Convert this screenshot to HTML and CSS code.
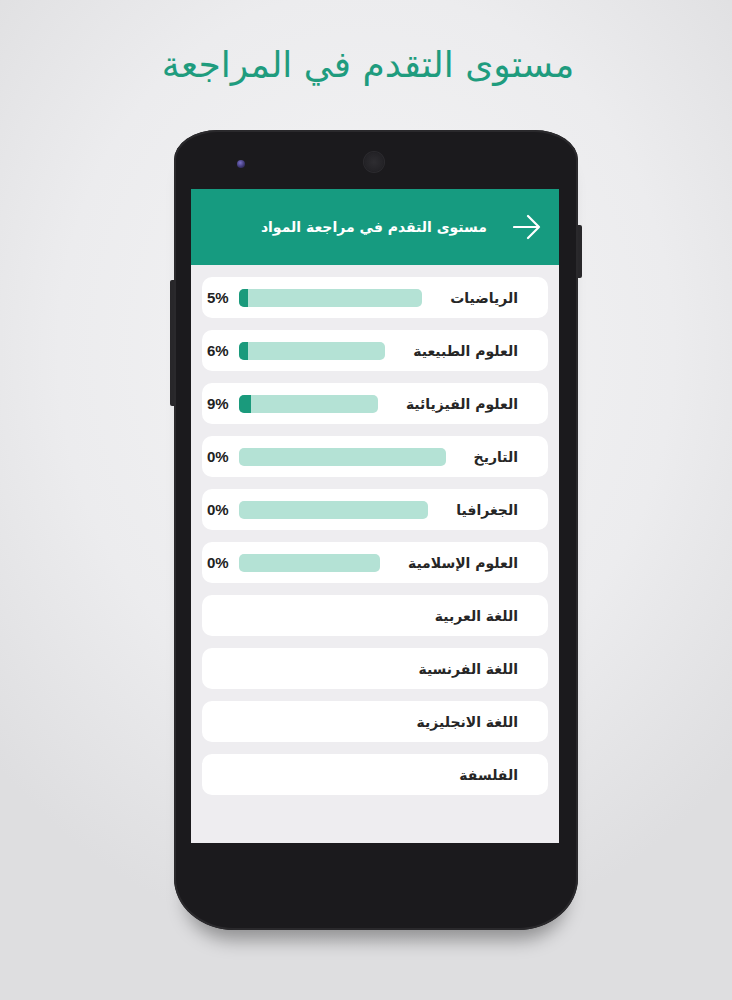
FILE: index.html
```html
<!DOCTYPE html>
<html lang="ar">
<head>
<meta charset="utf-8">
<link rel="stylesheet" href="styles.css">
</head>
<body>
<div class="page">
  <h1 class="title">مستوى التقدم في المراجعة</h1>
  <div class="phone">
    <span class="btn-left"></span>
    <span class="btn-right"></span>
    <div class="bezel-top">
      <span class="camera"></span>
      <span class="speaker"></span>
    </div>
    <div class="screen">
      <div class="appbar">
        <svg class="arrow" viewBox="0 0 28 26" width="28" height="26"><path d="M1 13 H26 M15 2 L26 13 L15 24" fill="none" stroke="#fff" stroke-width="2.2" stroke-linecap="round" stroke-linejoin="round"/></svg>
        <span class="appbar-title">مستوى التقدم في مراجعة المواد</span>
      </div>
      <div class="list">
        <div class="row"><span class="label">الرياضيات</span><div class="track"><div class="fill" style="width:5%"></div></div><span class="pct">5%</span></div>
        <div class="row"><span class="label">العلوم الطبيعية</span><div class="track"><div class="fill" style="width:6%"></div></div><span class="pct">6%</span></div>
        <div class="row"><span class="label">العلوم الفيزيائية</span><div class="track"><div class="fill" style="width:9%"></div></div><span class="pct">9%</span></div>
        <div class="row"><span class="label">التاريخ</span><div class="track"><div class="fill" style="width:0%"></div></div><span class="pct">0%</span></div>
        <div class="row"><span class="label">الجغرافيا</span><div class="track"><div class="fill" style="width:0%"></div></div><span class="pct">0%</span></div>
        <div class="row"><span class="label">العلوم الإسلامية</span><div class="track"><div class="fill" style="width:0%"></div></div><span class="pct">0%</span></div>
        <div class="row"><span class="label">اللغة العربية</span></div>
        <div class="row"><span class="label">اللغة الفرنسية</span></div>
        <div class="row"><span class="label">اللغة الانجليزية</span></div>
        <div class="row"><span class="label">الفلسفة</span></div>
      </div>
    </div>
  </div>
</div>
</body>
</html>
```
FILE: styles.css
```css
html, body {
  margin: 0;
  padding: 0;
}
body {
  width: 732px;
  height: 1000px;
  overflow: hidden;
  background: radial-gradient(ellipse 70% 60% at 50% 35%, #f4f4f5 0%, #ececee 60%, #dedee0 100%);
  font-family: "DejaVu Sans", "Noto Sans", sans-serif;
}
.page {
  display: flex;
  flex-direction: column;
  align-items: center;
}
.title {
  margin: 36px 0 0 4px;
  height: 58px;
  line-height: 58px;
  font-size: 36px;
  font-weight: normal;
  color: #1f9c7e;
  direction: rtl;
}
.phone {
  position: relative;
  margin: 36px 0 0 20px;
  width: 404px;
  height: 800px;
  box-sizing: border-box;
  background: #1b1a1d;
  border-radius: 44px 44px 60px 60px / 30px 30px 52px 52px;
  box-shadow: inset 0 0 0 2px #2a292c, 0 22px 18px -12px rgba(0,0,0,0.35);
  padding: 0 19px 0 17px;
  display: flex;
  flex-direction: column;
}
.btn-left {
  position: absolute;
  left: -4px;
  top: 150px;
  width: 4px;
  height: 126px;
  background: #28272a;
  border-radius: 2px 0 0 2px;
}
.btn-right {
  position: absolute;
  right: -4px;
  top: 95px;
  width: 4px;
  height: 53px;
  background: #28272a;
  border-radius: 0 2px 2px 0;
}
.bezel-top {
  height: 59px;
  position: relative;
}
.camera {
  position: absolute;
  left: 46px;
  top: 30px;
  width: 8px;
  height: 8px;
  border-radius: 50%;
  background: radial-gradient(circle at 40% 35%, #7a70c8 0%, #3b3470 60%, #1e1b30 100%);
}
.speaker {
  position: absolute;
  left: 173px;
  top: 22px;
  width: 20px;
  height: 20px;
  border-radius: 50%;
  background: radial-gradient(circle, #2e2d31 0%, #232226 70%, #1b1a1d 100%);
  box-shadow: 0 0 0 1px #2c2b2f;
}
.screen {
  width: 368px;
  height: 654px;
  background: #eeedf0;
  display: flex;
  flex-direction: column;
}
.appbar {
  height: 76px;
  background: #169b80;
  display: flex;
  flex-direction: row-reverse;
  align-items: center;
  padding-right: 18px;
  gap: 26px;
  box-sizing: border-box;
}
.arrow {
  display: block;
}
.appbar-title {
  color: #ffffff;
  font-size: 14px;
  font-weight: bold;
  direction: rtl;
}
.list {
  padding: 12px 11px;
  display: flex;
  flex-direction: column;
  gap: 12px;
}
.row {
  height: 41px;
  background: #ffffff;
  border-radius: 10px;
  display: flex;
  flex-direction: row-reverse;
  align-items: center;
  padding: 0 30px 0 5px;
  box-sizing: border-box;
}
.label {
  direction: rtl;
  font-size: 14px;
  font-weight: bold;
  color: #262626;
  white-space: nowrap;
}
.track {
  flex: 1;
  height: 18px;
  margin: 0 28px 0 10px;
  background: #b4e2d5;
  border-radius: 5px;
  overflow: hidden;
  display: flex;
  flex-direction: row;
}
.fill {
  height: 100%;
  background: #1a9a7c;
  min-width: 0;
}
.pct {
  font-family: "Liberation Sans", "DejaVu Sans", sans-serif;
  font-size: 15px;
  font-weight: bold;
  color: #222222;
  width: 22px;
  text-align: left;
}
```
